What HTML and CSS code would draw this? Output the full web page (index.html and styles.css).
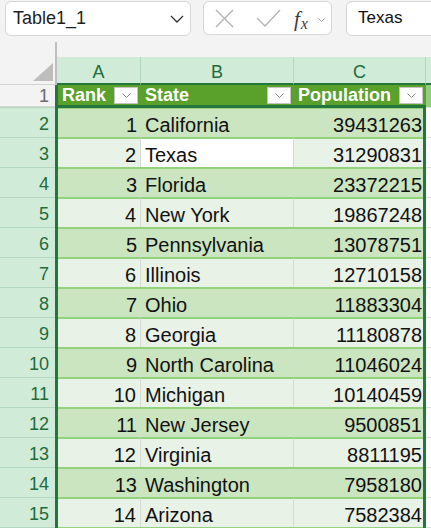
FILE: index.html
```html
<!DOCTYPE html>
<html>
<head>
<meta charset="utf-8">
<link rel="stylesheet" href="styles.css">
</head>
<body>
<div class="app">
  <div class="fbar">
    <div class="namebox">
      <span>Table1_1</span>
      <svg class="nb-chev" width="14" height="8" viewBox="0 0 14 8"><polyline points="1,1 7,7 13,1" fill="none" stroke="#333" stroke-width="1.3"/></svg>
    </div>
    <div class="fxbox">
      <svg class="ic-x" width="19" height="19" viewBox="0 0 19 19"><path d="M1 1 L18 18 M18 1 L1 18" stroke="#b4b4b4" stroke-width="1.4" fill="none"/></svg>
      <svg class="ic-check" width="25" height="19" viewBox="0 0 25 19"><polyline points="1,9 9,17 24,1" fill="none" stroke="#b4b4b4" stroke-width="1.4"/></svg>
      <span class="fx"><span class="fx-f">f</span><span class="fx-x">x</span></span>
      <svg class="ic-small" width="7" height="4" viewBox="0 0 7 4"><polyline points="0.5,0.5 3.5,3.5 6.5,0.5" fill="none" stroke="#9a9a9a" stroke-width="1"/></svg>
    </div>
    <div class="finput">Texas</div>
  </div>

  <div class="sheet">
    <div class="colheads">
      <div class="corner"><div class="tri"></div></div>
      <div class="ch">A</div>
      <div class="ch">B</div>
      <div class="ch">C</div>
      <div class="ch ch-d"></div>
    </div>

    <div class="row r-head">
      <div class="rh rh-plain">1</div>
      <div class="hc hc-a"><span>Rank</span><span class="filt"><svg width="9" height="5" viewBox="0 0 9 5"><polyline points="0.5,0.5 4.5,4.5 8.5,0.5" fill="none" stroke="#8a8a8a" stroke-width="1"/></svg></span></div>
      <div class="hc"><span>State</span><span class="filt"><svg width="9" height="5" viewBox="0 0 9 5"><polyline points="0.5,0.5 4.5,4.5 8.5,0.5" fill="none" stroke="#8a8a8a" stroke-width="1"/></svg></span></div>
      <div class="hc"><span>Population</span><span class="filt"><svg width="9" height="5" viewBox="0 0 9 5"><polyline points="0.5,0.5 4.5,4.5 8.5,0.5" fill="none" stroke="#8a8a8a" stroke-width="1"/></svg></span></div>
      <div class="hc-d"></div>
    </div>

    <div class="row dark"><div class="rh">2</div><div class="c num">1</div><div class="c">California</div><div class="c num">39431263</div><div class="cd"></div></div>
    <div class="row light"><div class="rh">3</div><div class="c num">2</div><div class="c active">Texas</div><div class="c num">31290831</div><div class="cd"></div></div>
    <div class="row dark"><div class="rh">4</div><div class="c num">3</div><div class="c">Florida</div><div class="c num">23372215</div><div class="cd"></div></div>
    <div class="row light"><div class="rh">5</div><div class="c num">4</div><div class="c">New York</div><div class="c num">19867248</div><div class="cd"></div></div>
    <div class="row dark"><div class="rh">6</div><div class="c num">5</div><div class="c">Pennsylvania</div><div class="c num">13078751</div><div class="cd"></div></div>
    <div class="row light"><div class="rh">7</div><div class="c num">6</div><div class="c">Illinois</div><div class="c num">12710158</div><div class="cd"></div></div>
    <div class="row dark"><div class="rh">8</div><div class="c num">7</div><div class="c">Ohio</div><div class="c num">11883304</div><div class="cd"></div></div>
    <div class="row light"><div class="rh">9</div><div class="c num">8</div><div class="c">Georgia</div><div class="c num">11180878</div><div class="cd"></div></div>
    <div class="row dark"><div class="rh">10</div><div class="c num">9</div><div class="c">North Carolina</div><div class="c num">11046024</div><div class="cd"></div></div>
    <div class="row light"><div class="rh">11</div><div class="c num">10</div><div class="c">Michigan</div><div class="c num">10140459</div><div class="cd"></div></div>
    <div class="row dark"><div class="rh">12</div><div class="c num">11</div><div class="c">New Jersey</div><div class="c num">9500851</div><div class="cd"></div></div>
    <div class="row light"><div class="rh">13</div><div class="c num">12</div><div class="c">Virginia</div><div class="c num">8811195</div><div class="cd"></div></div>
    <div class="row dark"><div class="rh">14</div><div class="c num">13</div><div class="c">Washington</div><div class="c num">7958180</div><div class="cd"></div></div>
    <div class="row light"><div class="rh">15</div><div class="c num">14</div><div class="c">Arizona</div><div class="c num">7582384</div><div class="cd"></div></div>
    <div class="row dark"><div class="rh"></div><div class="c"></div><div class="c"></div><div class="c"></div><div class="cd"></div></div>

    <div class="selection"></div>
  </div>
</div>
</body>
</html>
```

FILE: styles.css
```css
* { box-sizing: border-box; margin: 0; padding: 0; }
html, body { width: 431px; height: 528px; overflow: hidden; background: #f3f3f3; }
body { font-family: "Liberation Sans", Arial, sans-serif; color: #111; }

.app { width: 431px; height: 528px; overflow: hidden; display: flex; flex-direction: column; }

/* formula bar */
.fbar { height: 42px; flex: none; display: flex; align-items: flex-start; padding: 1px 0 0 5px; }
.namebox {
  flex: none; width: 186px; height: 35px; background: #fff;
  border: 1px solid #d6d6d6; border-radius: 6px;
  display: flex; align-items: center; justify-content: space-between;
  padding: 0 6px 1px 7px; font-size: 18px; color: #1f1f1f; margin-right: 12px;
}
.nb-chev { margin-top: 2px; }
.fxbox {
  flex: none; width: 129px; height: 34px; background: #fff;
  border: 1px solid #d6d6d6; border-radius: 6px;
  display: flex; align-items: center; padding-left: 11px; margin-right: 14px;
}
.ic-x { margin-right: 22px; }
.ic-check { margin-right: 13px; margin-top: 1px; }
.fx { display: flex; align-items: baseline; color: #3c3c3c; font-family: "Liberation Serif", serif; font-style: italic; margin-right: 10px; margin-top: 2px; }
.fx-f { font-size: 21px; }
.fx-x { font-size: 16px; position: relative; top: 3px; margin-left: 1px; }
.ic-small { margin-top: 3px; }
.finput {
  flex: none; width: 110px; height: 35px; background: #fff;
  border: 1px solid #d6d6d6; border-radius: 6px;
  display: flex; align-items: center; padding: 0 0 1px 11px;
  font-size: 17px; color: #111;
}

/* sheet */
.sheet { position: relative; flex: 1; overflow: hidden; }
.colheads { display: grid; grid-template-columns: 57px 84px 153px 132px 1fr; height: 43px; align-items: end; }
.corner {
  height: 43px; background: #f3f3f3; border-right: 2px solid #bfbfbf; border-bottom: 1px solid #d2d2d2;
  display: flex; justify-content: flex-end; align-items: flex-end; padding: 0 2px 3px 0;
}
.tri { width: 20px; height: 18px; background: #bdbdbd; clip-path: polygon(100% 0, 100% 100%, 0 100%); }
.ch {
  height: 28px; background: #d0ebd8; border-bottom: 2px solid #23773a; border-right: 1px solid #b3d8bf;
  font-size: 18px; color: #1e6b3b; text-align: center; padding-top: 6px; line-height: 18px;
}
.ch-d { border-right: none; }

.row { display: grid; grid-template-columns: 55px 86px 153px 132px 1fr; height: 30px; }
.r-head { height: 22px; }
.rh {
  background: #d0ebd8; border-top: 1px solid #b3d8bf; color: #1e6b3b;
  font-size: 18px; text-align: right; padding: 6px 6px 0 0; line-height: 20px;
}
.rh-plain { background: #f3f3f3; color: #6b6b6b; border-top: none; border-bottom: 1px solid #d6d6d6; padding-top: 1px; }

.hc {
  background: #5aa12b; color: #fff; font-weight: bold; font-size: 18px;
  display: flex; align-items: flex-start; justify-content: space-between;
  padding: 1px 3px 0 4px; line-height: 19px;
}
.hc-a { border-left: 3px solid #23773a; }
.hc-d { background: #8fd07a; }
.filt {
  width: 24px; height: 17px; margin-top: 1px; background: #fff; border: 1px solid #c4c4c4;
  display: flex; align-items: center; justify-content: center;
}

.c {
  border-top: 2px solid #93d17c; font-size: 20px; color: #111;
  padding: 5px 4px 0 4px; line-height: 22px; white-space: nowrap; overflow: hidden;
}
.num { text-align: right; }
.dark .c { background: #cce5c1; }
.light .c { background: #e9f2e7; }
.light .c:nth-child(2), .light .c:nth-child(3) { border-right: 1px solid #d5dbd3; }
.c.active { background: #fff; }
.cd { background: #fff; border-top: 1px solid #e0e0e0; }

.selection {
  position: absolute; left: 55px; top: 63px; width: 371px; height: 520px;
  border: 3px solid #23773a; pointer-events: none;
}
```
